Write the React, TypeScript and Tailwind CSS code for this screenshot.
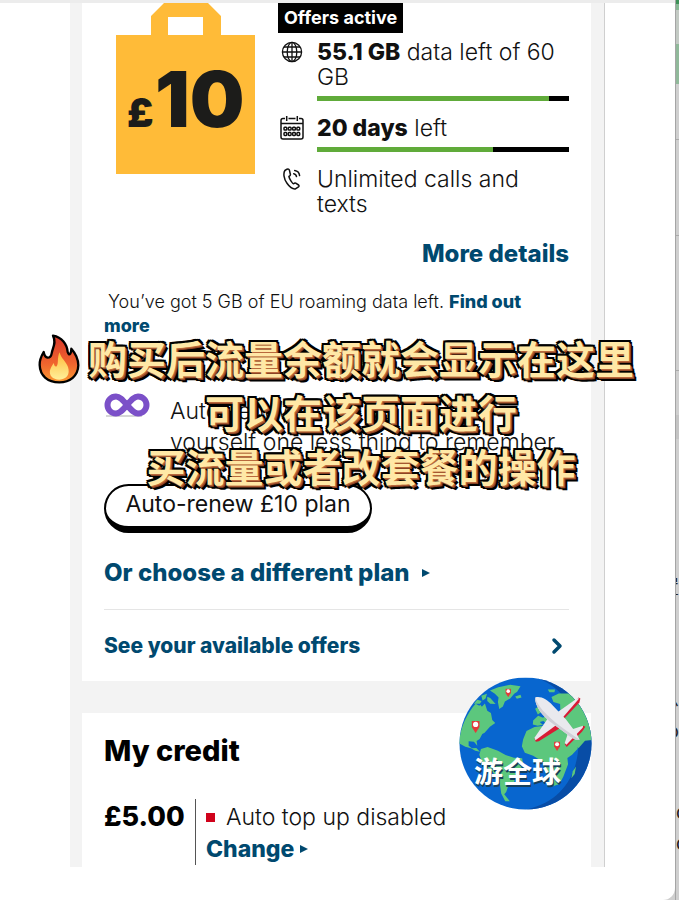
import type { ReactNode } from 'react';
import { ChevronRight } from 'lucide-react';

function Bag() {
  return (
    <svg viewBox="0 0 139 171" className="ml-3 w-[139px] h-[171px] shrink-0" role="img" aria-label="£10 plan">
      <path fill="#ffbb38" fillRule="evenodd" d="M0 32H35V13L48 0H92L105 13V32H139V171H0ZM52 14V32H87V14Z" />
      <text x="11" y="124" fontSize="40" fontWeight="900" fill="#1c1c1a">£</text>
      <text x="39" y="124" fontSize="77" fontWeight="900" fill="#1c1c1a">10</text>
    </svg>
  );
}

function GlobeIcon() {
  return (
    <svg viewBox="0 0 22 22" className="mt-px ml-[3px] size-[22px]" fill="none" stroke="#111" strokeWidth="1.3">
      <circle cx="11" cy="11" r="9.6" />
      <ellipse cx="11" cy="11" rx="4.8" ry="9.6" />
      <path d="M11 1.4V20.6M1.4 11H20.6M2.8 6H19.2M2.8 16H19.2" />
    </svg>
  );
}

function CalendarIcon() {
  return (
    <svg viewBox="0 0 24 24" className="ml-[2px] size-6" fill="none" stroke="#111" strokeWidth="1.5">
      <path d="M5 2.6H3Q1 2.6 1 4.6V21Q1 23 3 23H21Q23 23 23 21V4.6Q23 2.6 21 2.6H19M8.5 2.6H15.5M1 7.5H23" />
      <path d="M6.7 0V5M17.3 0V5" />
      {[4, 8.3, 12.6, 16.9].map(x => (
        <g key={x}>
          <rect x={x} y="11.2" width="2.8" height="2.8" rx="0.8" />
          <rect x={x} y="16.6" width="2.8" height="2.8" rx="0.8" />
        </g>
      ))}
    </svg>
  );
}

function PhoneIcon() {
  return (
    <svg viewBox="0 0 18 22" className="mt-px ml-[5px] w-[18px] h-[22px]" fill="none" stroke="#111" strokeWidth="1.5" strokeLinejoin="round" strokeLinecap="round">
      <path d="M4 1.2L1.9 2.5C.2 5 .6 10.5 4 15.3C6.6 19 10 21.2 12.4 20.9L15.5 18.9C16.3 18.3 16.1 17.5 15.6 17L12.7 15.1C12 14.7 11.3 15 10.6 15.7C9.6 15.9 6.4 11 5.9 8.5C6.9 7.9 7.6 7.5 7.4 6.5L6.4 2.2C6 1.1 5.1.7 4 1.2Z" />
      <path d="M10.7 5.7C12.3 6 13.3 7 13.5 8.6M11.7 2.6C14.4 3 16.3 4.9 16.6 7.6" />
    </svg>
  );
}

function Infinity() {
  return (
    <svg viewBox="0 0 46 24" className="w-[46px] h-6 mt-[-3px]" fill="none">
      <path d="M2 23H38" stroke="#c9c9c9" strokeWidth="1.5" />
      <path d="M23 12C18 6 15.5 3.5 12 3.5C7 3.5 3.5 7.4 3.5 12S7 20.5 12 20.5C15.5 20.5 18 18 23 12C28 6 30.5 3.5 34 3.5C39 3.5 42.5 7.4 42.5 12S39 20.5 34 20.5C30.5 20.5 28 18 23 12Z" stroke="#7b50c8" strokeWidth="6" />
    </svg>
  );
}

function Flame() {
  return (
    <svg viewBox="0 0 126 150" className="absolute right-full top-1 mr-2 w-[42px] h-[50px]">
      <defs>
        <linearGradient id="flame" x1="0" y1="0" x2="0" y2="1">
          <stop offset="0" stopColor="#d9382b" />
          <stop offset="0.6" stopColor="#f0642e" />
          <stop offset="1" stopColor="#fb9a32" />
        </linearGradient>
        <linearGradient id="flameCore" x1="0" y1="0" x2="0" y2="1">
          <stop offset="0" stopColor="#ffb938" />
          <stop offset="1" stopColor="#fff09a" />
        </linearGradient>
      </defs>
      <path fill="url(#flame)" stroke="#000" strokeWidth="7" strokeLinejoin="round" d="M45 5C72 10 87 30 89 54C91 61 94 63 97 59C100 54 100 50 100 44C115 61 121 78 121 94C120 126 96 145 64 145C28 145 6 124 5 93C4 79 10 66 17 54C19 64 23 70 29 71C36 71 40 64 41 58C44 40 56 27 45 5Z" />
      <path fill="url(#flameCore)" d="M65 55C69 74 84 82 90 99C97 121 86 136 64 137C43 137 33 124 36 109C38 101 43 94 47 87C49 96 52 99 56 97C63 88 56 72 65 55Z" />
    </svg>
  );
}

function Pin({ x, y, size }: { x: number; y: number; size: number }) {
  return (
    <svg x={x} y={y} width={size} height={size * 1.5} viewBox="0 0 20 30">
      <path fill="#e23a3a" d="M1 2H19V16L10 30L1 16Z" />
      <circle cx="10" cy="10" r="6" fill="#fff" />
    </svg>
  );
}

function World() {
  return (
    <div className="absolute right-[83px] bottom-[90px] size-[133px]">
      <svg viewBox="12 17 400 397" className="size-full">
        <defs>
          <clipPath id="disc"><circle cx="212" cy="215.5" r="198.5" /></clipPath>
        </defs>
        <g clipPath="url(#disc)">
          <rect x="12" y="17" width="400" height="400" fill="#0866cf" />
          <path fill="#084da6" d="M245 17C330 50 375 125 372 215C368 315 320 390 215 414H420V17Z" />
          <g fill="#5cc77d">
            <path d="M12 215C15 165 40 120 62 96L80 106L90 95L97 117L108 124L112 145L121 154L105 165L89 183L82 187L74 202L65 208L67 222L57 210L41 209L41 222L51 230L64 229L75 240L61 237L48 230L31 225Z" />
            <path d="M57 96L67 84L80 88L75 96ZM79 72L96 66L92 80L83 86ZM97 75L106 79L122 97L106 96L97 88ZM64 111L76 99L86 112L75 121Z" />
            <path d="M105 56L130 46L166 39L197 43L187 60L178 66L166 80L150 89L144 104L133 112L129 91L131 77L120 66ZM181 74L197 69L200 77L186 81Z" />
            <path d="M78 232L98 226L129 237L152 250L177 258L202 260L205 282L184 304L178 331L160 343L154 361L148 368L165 389L151 389L139 366L133 324L111 300L82 274L73 249Z" />
            <path d="M205 203L215 178L239 166L263 163L289 174L321 177L336 196L365 212L369 231L352 249L338 259L340 278L326 315L314 337L288 346L275 310L263 270L235 252L210 243L201 224Z" />
            <path d="M235 146L250 132L265 138L275 130L292 134L317 126L316 97L296 91L290 76L312 65L350 65C382 86 410 133 413 205L391 207L372 229L354 222L339 207L326 184L303 177L289 162L267 158L249 162L234 158Z" />
            <path d="M241 111L254 103L260 121L249 128ZM354 299L364 285L360 307L350 320ZM279 53L301 53L299 61L284 61Z" />
          </g>
          <path fill="#0866cf" d="M292 139L306 136L313 145L302 150ZM255 151L266 148L275 157L263 158Z" />
        </g>
        <Pin x={49} y={145} size={26} />
        <Pin x={151} y={49} size={18} />
        <Pin x={297} y={208} size={20} />
        <g fill="#d81b35">
          <path d="M310 146L371 77L377 80L374 92L326 143Z" />
          <path d="M300 157L239 200L243 210L252 209L315 170Z" />
          <path d="M354 180L386 162L392 165L382 180L336 226L330 218Z" />
        </g>
        <g fill="#e9e9ee">
          <path d="M307 122L371 77L372 82L324 137Z" />
          <path d="M279 140L307 158L242 206L239 198Z" />
          <path d="M348 174L385 162L384 168L335 219L330 214L340 184Z" />
          <path d="M241 77C257 72 277 82 294 101L334 143L365 185L375 204C364 207 348 198 336 187L291 154C263 132 240 104 241 77Z" />
        </g>
        <path fill="#cfcfd7" d="M241 77C252 113 292 145 332 175L375 204C364 207 348 198 336 187L291 154C263 132 240 104 241 77Z" />
      </svg>
      <span className="absolute inset-x-0 top-[78px] pr-4 text-center text-[29px] leading-[36px] font-bold text-white [text-shadow:1px_2px_0_#16405c]">游全球</span>
    </div>
  );
}

function Usage({ icon, used, children }: { icon: ReactNode; used?: number; children: ReactNode }) {
  return (
    <li className="grid grid-cols-[39px_1fr]">
      {icon}
      <div>
        <p>{children}</p>
        {used !== undefined && (
          <div className="mt-[6px] h-[5px] bg-black">
            <div className="h-full bg-[#60ab3a]" style={{ width: `${used}%` }} />
          </div>
        )}
      </div>
    </li>
  );
}

function SideStrip() {
  return (
    <aside className="w-1 shrink-0 overflow-hidden border-l border-[#a5a5a5] bg-[#cfcfcf] text-[19px] leading-6 text-[#222]">
      <div className="h-1 bg-[#3d9157]" />
      <div className="h-[6px] bg-[#87b894]" />
      <div className="h-[34px] bg-[#c3cac4]" />
      <div className="h-10 bg-[#90b99a]" />
      <div className="h-14 border-b border-[#aaa]" />
      <div className="h-24 border-b border-[#aaa]" />
      <div className="h-[135px] border-b border-[#aaa]" />
      <div className="mt-11 h-6 bg-[#c4c4c4]" />
      <p className="mt-[137px] flex h-6 justify-end">置</p>
      <p className="mt-[88px] flex h-6 justify-end">息</p>
      <p className="mt-2 flex h-6 justify-end">o</p>
      <p className="mt-[57px] h-6">d</p>
      <p className="mt-[7px] h-6">d</p>
    </aside>
  );
}

export default function App() {
  const link = 'font-extrabold text-[#00496f]';

  return (
    <div className="flex min-h-screen bg-[#cfcfcf] font-['Inter','Noto_Sans_CJK_SC',sans-serif] text-[#111]">
      <main className="relative min-w-0 flex-1 rounded-br-xl border-t-[3px] border-[#ececec] bg-white">
        <div className="mx-[70px] border-r border-[#cfcfcf] bg-[#f3f3f3] pr-[13px] pl-3">
          <section className="bg-white px-[22px] pb-[23px]">
            <div className="flex gap-[23px]">
              <Bag />
              <div className="flex-1">
                <h2 className="inline-block bg-black px-[6px] align-top text-[18px] leading-[30px] font-bold text-white">Offers active</h2>
                <ul className="mt-[7px] space-y-[15px] text-[23px] leading-[25px] font-light">
                  <Usage icon={<GlobeIcon />} used={92}>
                    <b className="font-extrabold">55.1 GB</b> data left of 60 GB
                  </Usage>
                  <Usage icon={<CalendarIcon />} used={70}>
                    <b className="font-extrabold">20 days</b> left
                  </Usage>
                  <Usage icon={<PhoneIcon />}>Unlimited calls and texts</Usage>
                </ul>
              </div>
            </div>
            <p className="mt-[25px] text-right text-[24px] leading-6">
              <a href="#details" className={link}>More details</a>
            </p>
            <p className="mt-6 indent-1 text-[18px] leading-6 font-light">
              You’ve got 5 GB of EU roaming data left. <a href="#roaming" className={link}>Find out more</a>
            </p>
            <div className="mt-[58px] flex gap-5 text-[23px] leading-[31px] font-light">
              <Infinity />
              <p>Auto-renew and give<br />yourself one less thing to remember</p>
            </div>
            <button className="mt-[26px] block h-[49px] w-[268px] rounded-full border-2 border-b-[7px] border-black bg-white pb-1 text-[23px] leading-6">
              Auto-renew £10 plan
            </button>
            <a href="#plans" className={`mt-7 flex items-center gap-3 text-[24px] leading-6 ${link}`}>
              Or choose a different plan
              <svg viewBox="0 0 8 8" className="size-2" fill="currentColor"><path d="M0 0L8 4L0 8Z" /></svg>
            </a>
            <hr className="mt-6 border-[#e5e5e5]" />
            <a href="#offers" className={`mt-6 flex items-center justify-between text-[21px] leading-6 ${link}`}>
              See your available offers
              <ChevronRight className="size-6" strokeWidth={3.5} />
            </a>
          </section>

          <section className="mt-8 bg-white px-[22px] pt-[22px] pb-1">
            <h2 className="text-[29px] leading-8 font-extrabold text-black">My credit</h2>
            <div className="mt-8 flex text-[23px] leading-8">
              <strong className="w-[91px] pt-[2px] text-[27px] font-extrabold text-black">£5.00</strong>
              <div className="-mb-[2px] border-l border-[#555] pt-[2px] pl-[10px]">
                <p className="flex items-center gap-[11px] font-light">
                  <span className="size-[9px] bg-[#d0021b]" />
                  Auto top up disabled
                </p>
                <a href="#change" className={`flex items-center gap-[6px] ${link}`}>
                  Change
                  <svg viewBox="0 0 8 8" className="size-2" fill="currentColor"><path d="M0 0L8 4L0 8Z" /></svg>
                </a>
              </div>
            </div>
          </section>
        </div>

        <div className="absolute inset-x-0 top-[327px] pl-[47px] text-center font-['Noto_Sans_CJK_SC',sans-serif] text-[39px] leading-[54px] font-bold text-[#ffe8a6] [text-shadow:1px_1px_0_#b9683c,2px_2px_0_#8a4425,-2px_-2px_0_#000,0_-2px_0_#000,2px_-2px_0_#000,-2px_0_0_#000,-2px_2px_0_#000,0_3px_0_#000,3px_0_0_#000,3px_3px_0_#000,4px_4px_0_#000]">
          <p><span className="relative inline-block"><Flame />购买后流量余额就会显示在这里</span></p>
          <p>可以在该页面进行</p>
          <p>买流量或者改套餐的操作</p>
        </div>
        <World />
      </main>
      <SideStrip />
    </div>
  );
}
